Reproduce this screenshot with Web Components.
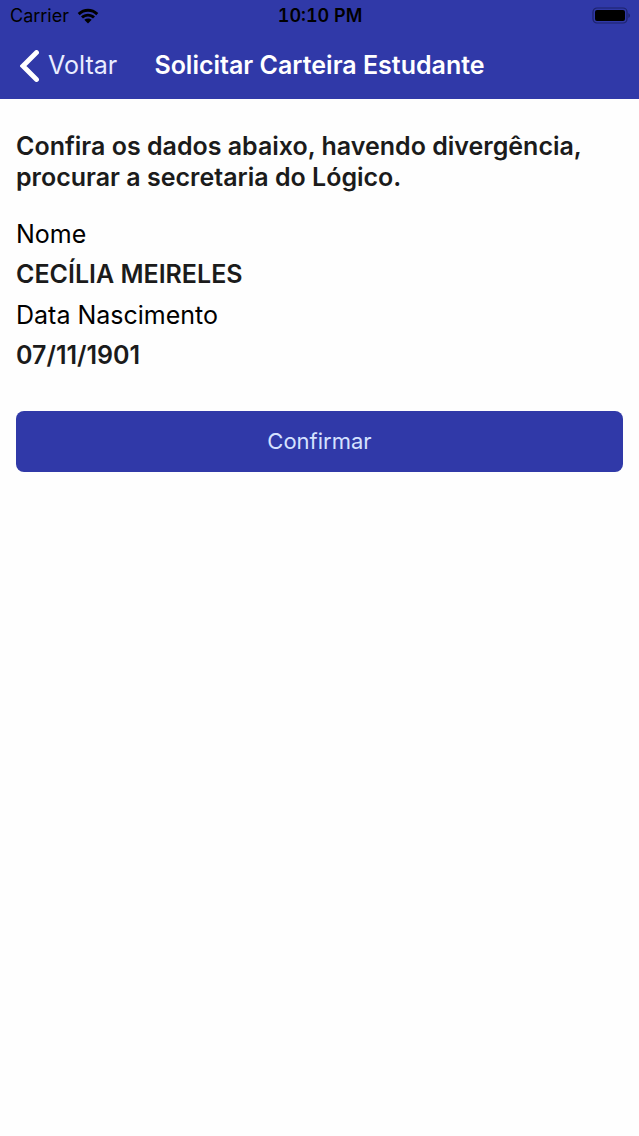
<!DOCTYPE html>
<html lang="pt-BR">
<head>
    <meta charset="utf-8">
    <meta name="viewport" content="width=device-width, initial-scale=1">
    <title>Solicitar Carteira Estudante</title>
    <style>
        body {
            --primary: #3039a8;
            margin: 0;
            background: #fefefe;
            color: #000;
            font-family: Inter, "Liberation Sans", sans-serif;
            font-size: 25px;
            line-height: 31px;
        }
    </style>
</head>
<body>
    <student-card-page></student-card-page>

    <script>
        class StatusBar extends HTMLElement {
            constructor() {
                super();
                this.attachShadow({ mode: 'open' });
            }

            connectedCallback() {
                this.shadowRoot.innerHTML = `
                    <style>
                        :host {
                            display: grid;
                            grid-template-columns: 1fr auto 1fr;
                            align-items: center;
                            height: 32px;
                            padding: 0 9px 0 10px;
                            background: var(--primary);
                            font-size: 18px;
                            line-height: 22px;
                        }
                        .carrier { display: flex; align-items: center; gap: 8px; }
                        .time { font-weight: 600; font-variant-numeric: tabular-nums; }
                        svg { display: block; }
                        .battery { justify-self: end; }
                    </style>
                    <span class="carrier">
                        <span>${this.getAttribute('carrier')}</span>
                        <svg width="22" height="16" viewBox="0 0 22 16" aria-hidden="true">
                            <path d="M.7 5.1C6.5-.6 15.5-.6 21.3 5.1L19.3 7.2C14.6 2.6 7.4 2.6 2.7 7.2Z"/>
                            <path d="M4 8.5C8 4.7 14 4.7 18 8.5L16 10.5C13.1 7.8 8.9 7.8 6 10.5Z"/>
                            <path d="M7.3 11.8C9.5 9.9 12.5 9.9 14.7 11.8L11 15.5Z"/>
                        </svg>
                    </span>
                    <span class="time">${this.getAttribute('time')}</span>
                    <svg class="battery" width="38" height="18" viewBox="0 0 38 18" aria-hidden="true">
                        <rect x="1" y="1" width="34" height="15" rx="4" fill="none" stroke="#1c226b" stroke-width="1.2"/>
                        <rect x="3" y="3" width="30" height="11" rx="2"/>
                        <path d="M36.4 6Q38 7 38 8.5T36.4 11Z" fill="#1c226b"/>
                    </svg>
                `;
            }
        }

        class NavBar extends HTMLElement {
            constructor() {
                super();
                this.attachShadow({ mode: 'open' });
            }

            connectedCallback() {
                this.shadowRoot.innerHTML = `
                    <style>
                        :host {
                            display: grid;
                            grid-template-columns: 1fr auto 1fr;
                            align-items: center;
                            height: 67px;
                            padding: 0 20px;
                            box-sizing: border-box;
                            background: var(--primary);
                            color: #fff;
                        }
                        button {
                            display: flex;
                            align-items: center;
                            justify-self: start;
                            gap: 9px;
                            padding: 0;
                            border: 0;
                            background: none;
                            color: #e9edff;
                            font: inherit;
                            cursor: pointer;
                        }
                        h1 { margin: 0; font-size: 25px; font-weight: 600; }
                        svg { display: block; }
                    </style>
                    <button type="button">
                        <svg width="19" height="32" viewBox="0 0 19 32" aria-hidden="true">
                            <path d="M16.5 2.5 3 16l13.5 13.5" fill="none" stroke="#fff" stroke-width="4.8" stroke-linecap="round" stroke-linejoin="miter"/>
                        </svg>
                        <span>${this.getAttribute('back')}</span>
                    </button>
                    <h1><slot></slot></h1>
                `;
            }
        }

        class DataField extends HTMLElement {
            constructor() {
                super();
                this.attachShadow({ mode: 'open' });
            }

            connectedCallback() {
                this.shadowRoot.innerHTML = `
                    <style>
                        :host { display: block; }
                        dl { display: grid; gap: 9px; margin: 0; }
                        dd { margin: 0; color: #1b1b1b; font-weight: 600; }
                    </style>
                    <dl>
                        <dt>${this.getAttribute('label')}</dt>
                        <dd><slot></slot></dd>
                    </dl>
                `;
            }
        }

        class PrimaryButton extends HTMLElement {
            constructor() {
                super();
                this.attachShadow({ mode: 'open' });
            }

            connectedCallback() {
                this.shadowRoot.innerHTML = `
                    <style>
                        :host { display: block; }
                        button {
                            display: block;
                            width: 100%;
                            padding: 15px;
                            border: 0;
                            border-radius: 8px;
                            background: var(--primary);
                            color: #d5e2ff;
                            font: inherit;
                            font-size: 22px;
                            cursor: pointer;
                        }
                    </style>
                    <button type="button"><slot></slot></button>
                `;
            }
        }

        class StudentCardPage extends HTMLElement {
            constructor() {
                super();
                this.attachShadow({ mode: 'open' });
            }

            connectedCallback() {
                this.shadowRoot.innerHTML = `
                    <style>
                        :host { display: block; }
                        main { padding: 32px 16px; }
                        h2 {
                            margin: 0 0 26px;
                            color: #1b1b1b;
                            font-size: 25px;
                            font-weight: 600;
                        }
                        .fields { display: grid; gap: 10px; margin-bottom: 40px; }
                    </style>
                    <header>
                        <status-bar carrier="Carrier" time="10:10 PM"></status-bar>
                        <nav-bar back="Voltar">Solicitar Carteira Estudante</nav-bar>
                    </header>
                    <main>
                        <h2>Confira os dados abaixo, havendo divergência, procurar a secretaria do Lógico.</h2>
                        <div class="fields">
                            <data-field label="Nome">CECÍLIA MEIRELES</data-field>
                            <data-field label="Data Nascimento">07/11/1901</data-field>
                        </div>
                        <primary-button>Confirmar</primary-button>
                    </main>
                `;
            }
        }

        customElements.define('status-bar', StatusBar);
        customElements.define('nav-bar', NavBar);
        customElements.define('data-field', DataField);
        customElements.define('primary-button', PrimaryButton);
        customElements.define('student-card-page', StudentCardPage);
    </script>
</body>
</html>
